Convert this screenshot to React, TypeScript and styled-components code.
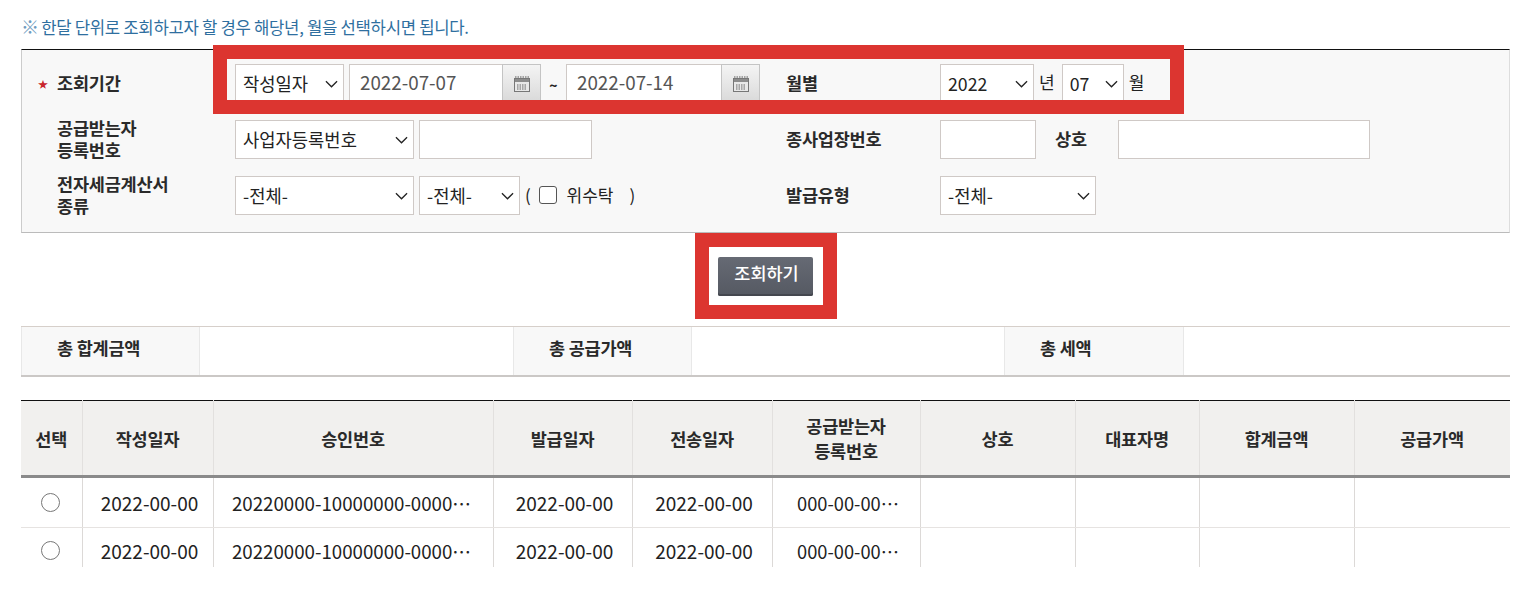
import { ReactNode } from 'react';
import styled, { createGlobalStyle } from 'styled-components';

const GlobalStyle = createGlobalStyle`
	html, body {
		margin: 0;
		background: #fff;
	}
	body, input, select, button {
		font-family: "Noto Sans CJK KR", "Noto Sans", sans-serif;
	}
`;

const columns = [61, 131, 280, 139, 140, 148, 155, 124, 155, 156];
const headers: ReactNode[] = [
	'선택',
	'작성일자',
	'승인번호',
	'발급일자',
	'전송일자',
	<>공급받는자<br />등록번호</>,
	'상호',
	'대표자명',
	'합계금액',
	'공급가액',
];

const Chevron = () => (
	<ChevronIcon viewBox="0 0 14 8" width="13" height="8">
		<path d="M1 1 L7 7 L13 1" fill="none" stroke="#222" strokeWidth="1.4" />
	</ChevronIcon>
);

const CalendarIcon = () => (
	<svg viewBox="0 0 18 18" width="18" height="18">
		<path d="M2 2 H16" stroke="#8a8a8a" strokeWidth="1.5" strokeDasharray="1.5 1" />
		<rect x="1.5" y="3.5" width="15" height="13" fill="#e8e8e8" stroke="#777" />
		<rect x="2" y="4" width="14" height="3" fill="#8c8c8c" />
		<path d="M4 10 H14 M4 12 H14 M4 14 H14" stroke="#666" strokeWidth="1.2" strokeDasharray="1.5 1" />
	</svg>
);

const SelectBox = ({ width, options }: { width: number; options: string }) => (
	<SelectWrap $width={width}>
		<Select defaultValue={options}>
			<option>{options}</option>
		</Select>
		<Chevron />
	</SelectWrap>
);

const DateField = ({ value, width }: { value: string; width: number }) => (
	<DateGroup>
		<DateInput $width={width} defaultValue={value} />
		<CalendarButton type="button">
			<CalendarIcon />
		</CalendarButton>
	</DateGroup>
);

const Row = () => (
	<tr>
		<td><Radio type="radio" name="pick" /></td>
		<td>2022-00-00</td>
		<td>20220000-10000000-0000…</td>
		<td>2022-00-00</td>
		<td>2022-00-00</td>
		<td>000-00-00…</td>
		<td></td>
		<td></td>
		<td></td>
		<td></td>
	</tr>
);

const App = () => (
	<Page>
		<GlobalStyle />
		<Notice><NoticeMark>※</NoticeMark> 한달 단위로 조회하고자 할 경우 해당년, 월을 선택하시면 됩니다.</Notice>
		<SearchPanel>
			<Highlight />
			<Label><Star>★</Star>조회기간</Label>
			<Controls>
				<SelectBox width={109} options="작성일자" />
				<DateField width={153} value="2022-07-07" />
				<Tilde>~</Tilde>
				<DateField width={155} value="2022-07-14" />
			</Controls>
			<Label>월별</Label>
			<Controls>
				<SelectBox width={94} options="2022" />
				<Unit>년</Unit>
				<SelectBox width={62} options="07" />
				<Unit>월</Unit>
			</Controls>

			<Label>공급받는자<br />등록번호</Label>
			<Controls>
				<SelectBox width={179} options="사업자등록번호" />
				<TextInput $width={173} />
			</Controls>
			<Label>종사업장번호</Label>
			<Controls>
				<TextInput $width={96} />
				<NameLabel>상호</NameLabel>
				<TextInput $width={252} />
			</Controls>

			<Label>전자세금계산서<br />종류</Label>
			<Controls>
				<SelectBox width={179} options="-전체-" />
				<SelectBox width={101} options="-전체-" />
				<CheckLabel>
					( <CheckBox type="checkbox" />위수탁<CloseParen>)</CloseParen>
				</CheckLabel>
			</Controls>
			<Label>발급유형</Label>
			<Controls>
				<SelectBox width={156} options="-전체-" />
			</Controls>
		</SearchPanel>

		<ButtonRow>
			<ButtonFrame>
				<SearchButton type="button">조회하기</SearchButton>
			</ButtonFrame>
		</ButtonRow>

		<Totals>
			<TotalLabel $width={179}>총 합계금액</TotalLabel>
			<TotalValue $width={313} />
			<TotalLabel $width={179}>총 공급가액</TotalLabel>
			<TotalValue $width={312} />
			<TotalLabel $width={180}>총 세액</TotalLabel>
			<TotalValue $width={326} />
		</Totals>

		<TableClip>
			<Table>
				<colgroup>
					{columns.map((w, i) => <col key={i} width={w} />)}
				</colgroup>
				<thead>
					<tr>
						{headers.map((h, i) => <th key={i}>{h}</th>)}
					</tr>
				</thead>
				<tbody>
					<Row />
					<Row />
				</tbody>
			</Table>
		</TableClip>
	</Page>
);

export default App;

const Page = styled.div`
	width: 1489px;
	height: 598px;
	padding-left: 21px;
	overflow: hidden;
	color: #222;
`;

const Notice = styled.div`
	height: 49px;
	padding-top: 15px;
	box-sizing: border-box;
	font-size: 16.7px;
	line-height: 24px;
	color: #2f6f9f;
	letter-spacing: -0.3px;
	white-space: nowrap;
`;

const NoticeMark = styled.span`
	margin-right: -1px;
	font-size: 18px;
	line-height: 20px;
	color: #6f9cc0;
`;

const SearchPanel = styled.div`
	position: relative;
	height: 184px;
	box-sizing: border-box;
	padding: 14px 0 17px 35px;
	display: grid;
	grid-template-columns: 178px 551px 154px 1fr;
	grid-auto-rows: 39px;
	row-gap: 17px;
	align-items: center;
	background: #f8f8f8;
	border-top: 1px solid #111;
	border-left: 1px solid #ccc;
	border-right: 1px solid #ddd;
	border-bottom: 1px solid #bbb;
`;

const Highlight = styled.div`
	position: absolute;
	left: 191px;
	top: -5px;
	width: 971px;
	height: 69px;
	box-sizing: border-box;
	border: 14px solid #dc3530;
	z-index: 2;
	pointer-events: none;
`;

const Label = styled.div`
	position: relative;
	padding-bottom: 1px;
	font-size: 17.5px;
	font-weight: 700;
	line-height: 22px;
	letter-spacing: -0.2px;
	color: #2a2a2a;
`;

const Star = styled.span`
	position: absolute;
	left: -19px;
	top: 1px;
	color: #c8242b;
	font-size: 10px;
`;

const Controls = styled.div`
	display: flex;
	align-items: center;
	gap: 5px;
	height: 39px;
`;

const SelectWrap = styled.div<{ $width: number }>`
	position: relative;
	width: ${(p) => p.$width}px;
	height: 39px;
	flex: none;
`;

const Select = styled.select`
	width: 100%;
	height: 100%;
	appearance: none;
	box-sizing: border-box;
	padding: 0 0 2px 7px;
	border: 1px solid #cfc9c6;
	background: #fff;
	border-radius: 0;
	font-size: 17.7px;
	color: #222;
`;

const ChevronIcon = styled.svg`
	position: absolute;
	right: 6px;
	top: 16px;
	pointer-events: none;
`;

const DateGroup = styled.div`
	display: flex;
	height: 39px;
`;

const DateInput = styled.input<{ $width: number }>`
	width: ${(p) => p.$width}px;
	height: 39px;
	box-sizing: border-box;
	padding: 0 0 4px 10px;
	border: 1px solid #cfc9c6;
	border-right: 0;
	background: #fff;
	font-size: 18.8px;
	color: #555;
	outline: none;
`;

const CalendarButton = styled.button`
	width: 39px;
	height: 39px;
	padding: 0;
	display: flex;
	align-items: center;
	justify-content: center;
	border: 1px solid #c4c4c4;
	background: linear-gradient(#f4f4f4, #d9d9d9);
`;

const Tilde = styled.span`
	width: 15px;
	padding-top: 3px;
	text-align: center;
	font-size: 14px;
	font-weight: 700;
`;

const Unit = styled.span`
	margin: -4px 2px 0 0;
	font-size: 17px;
`;

const TextInput = styled.input<{ $width: number }>`
	width: ${(p) => p.$width}px;
	height: 39px;
	flex: none;
	box-sizing: border-box;
	border: 1px solid #cfc9c6;
	background: #fff;
	outline: none;
`;

const NameLabel = styled.span`
	margin: 0 26px 2px 14px;
	font-size: 17.5px;
	font-weight: 700;
	letter-spacing: -0.2px;
	color: #2a2a2a;
`;

const CheckLabel = styled.label`
	display: flex;
	align-items: center;
	gap: 4px;
	padding-bottom: 2px;
	font-size: 17px;
	white-space: pre;
`;

const CheckBox = styled.input`
	appearance: none;
	width: 18px;
	height: 18px;
	margin: 0 6px 0 0;
	background: #fff;
	border: 1.5px solid #555;
	border-radius: 3px;
`;

const CloseParen = styled.span`
	margin-left: 12px;
`;

const ButtonRow = styled.div`
	height: 93px;
	display: flex;
	justify-content: center;
	align-items: flex-start;
`;

const ButtonFrame = styled.div`
	width: 142px;
	height: 86px;
	box-sizing: border-box;
	border: 14px solid #dc3530;
	display: flex;
	align-items: center;
	justify-content: center;
`;

const SearchButton = styled.button`
	width: 95px;
	height: 39px;
	border: 0;
	border-radius: 2px;
	padding: 0 0 7px 2px;
	background: linear-gradient(#666a74, #555962);
	box-shadow: inset 0 -2px 0 #44474f;
	color: #fff;
	font-size: 17.5px;
	font-weight: 500;
`;

const Totals = styled.div`
	display: flex;
	height: 51px;
	box-sizing: border-box;
	border-top: 1px solid #d6cfca;
	border-bottom: 2px solid #cbc8c6;
`;

const TotalLabel = styled.div<{ $width: number }>`
	width: ${(p) => p.$width}px;
	box-sizing: border-box;
	padding: 7px 0 0 35px;
	background: #f8f8f8;
	border-left: 1px solid #e8e8e8;
	border-right: 1px solid #e8e8e8;
	font-size: 17.5px;
	font-weight: 700;
	line-height: 28px;
	letter-spacing: -0.2px;
	color: #2a2a2a;
`;

const TotalValue = styled.div<{ $width: number }>`
	width: ${(p) => p.$width}px;
`;

const TableClip = styled.div`
	margin-top: 23px;
	height: 167px;
	overflow: hidden;
`;

const Table = styled.table`
	width: 1489px;
	table-layout: fixed;
	border-collapse: collapse;
	border-top: 1px solid #111;

	th {
		height: 74px;
		padding: 0;
		background: #f1f0ee;
		border-bottom: 3px solid #8a8a8a;
		border-right: 1px solid #e2e0de;
		font-size: 17.5px;
		font-weight: 700;
		line-height: 25px;
		letter-spacing: -0.2px;
		color: #2a2a2a;
	}

	td {
		height: 49px;
		padding: 0 0 0 4px;
		text-align: center;
		white-space: nowrap;
		border-bottom: 1px solid #e6e3e1;
		border-right: 1px solid #dcd9d7;
		font-size: 19px;
		line-height: 24px;
		color: #222;
	}

	td:nth-child(3) {
		padding: 0 3px 0 0;
		font-size: 18.7px;
	}

	td:nth-child(6) {
		font-size: 18.3px;
	}

	tbody tr:nth-child(2) td {
		height: 45px;
		padding-bottom: 4px;
	}
`;

const Radio = styled.input`
	appearance: none;
	display: block;
	width: 19px;
	height: 19px;
	margin: 0 auto 1px 16px;
	background: #fff;
	border: 1.5px solid #777;
	border-radius: 50%;
`;
